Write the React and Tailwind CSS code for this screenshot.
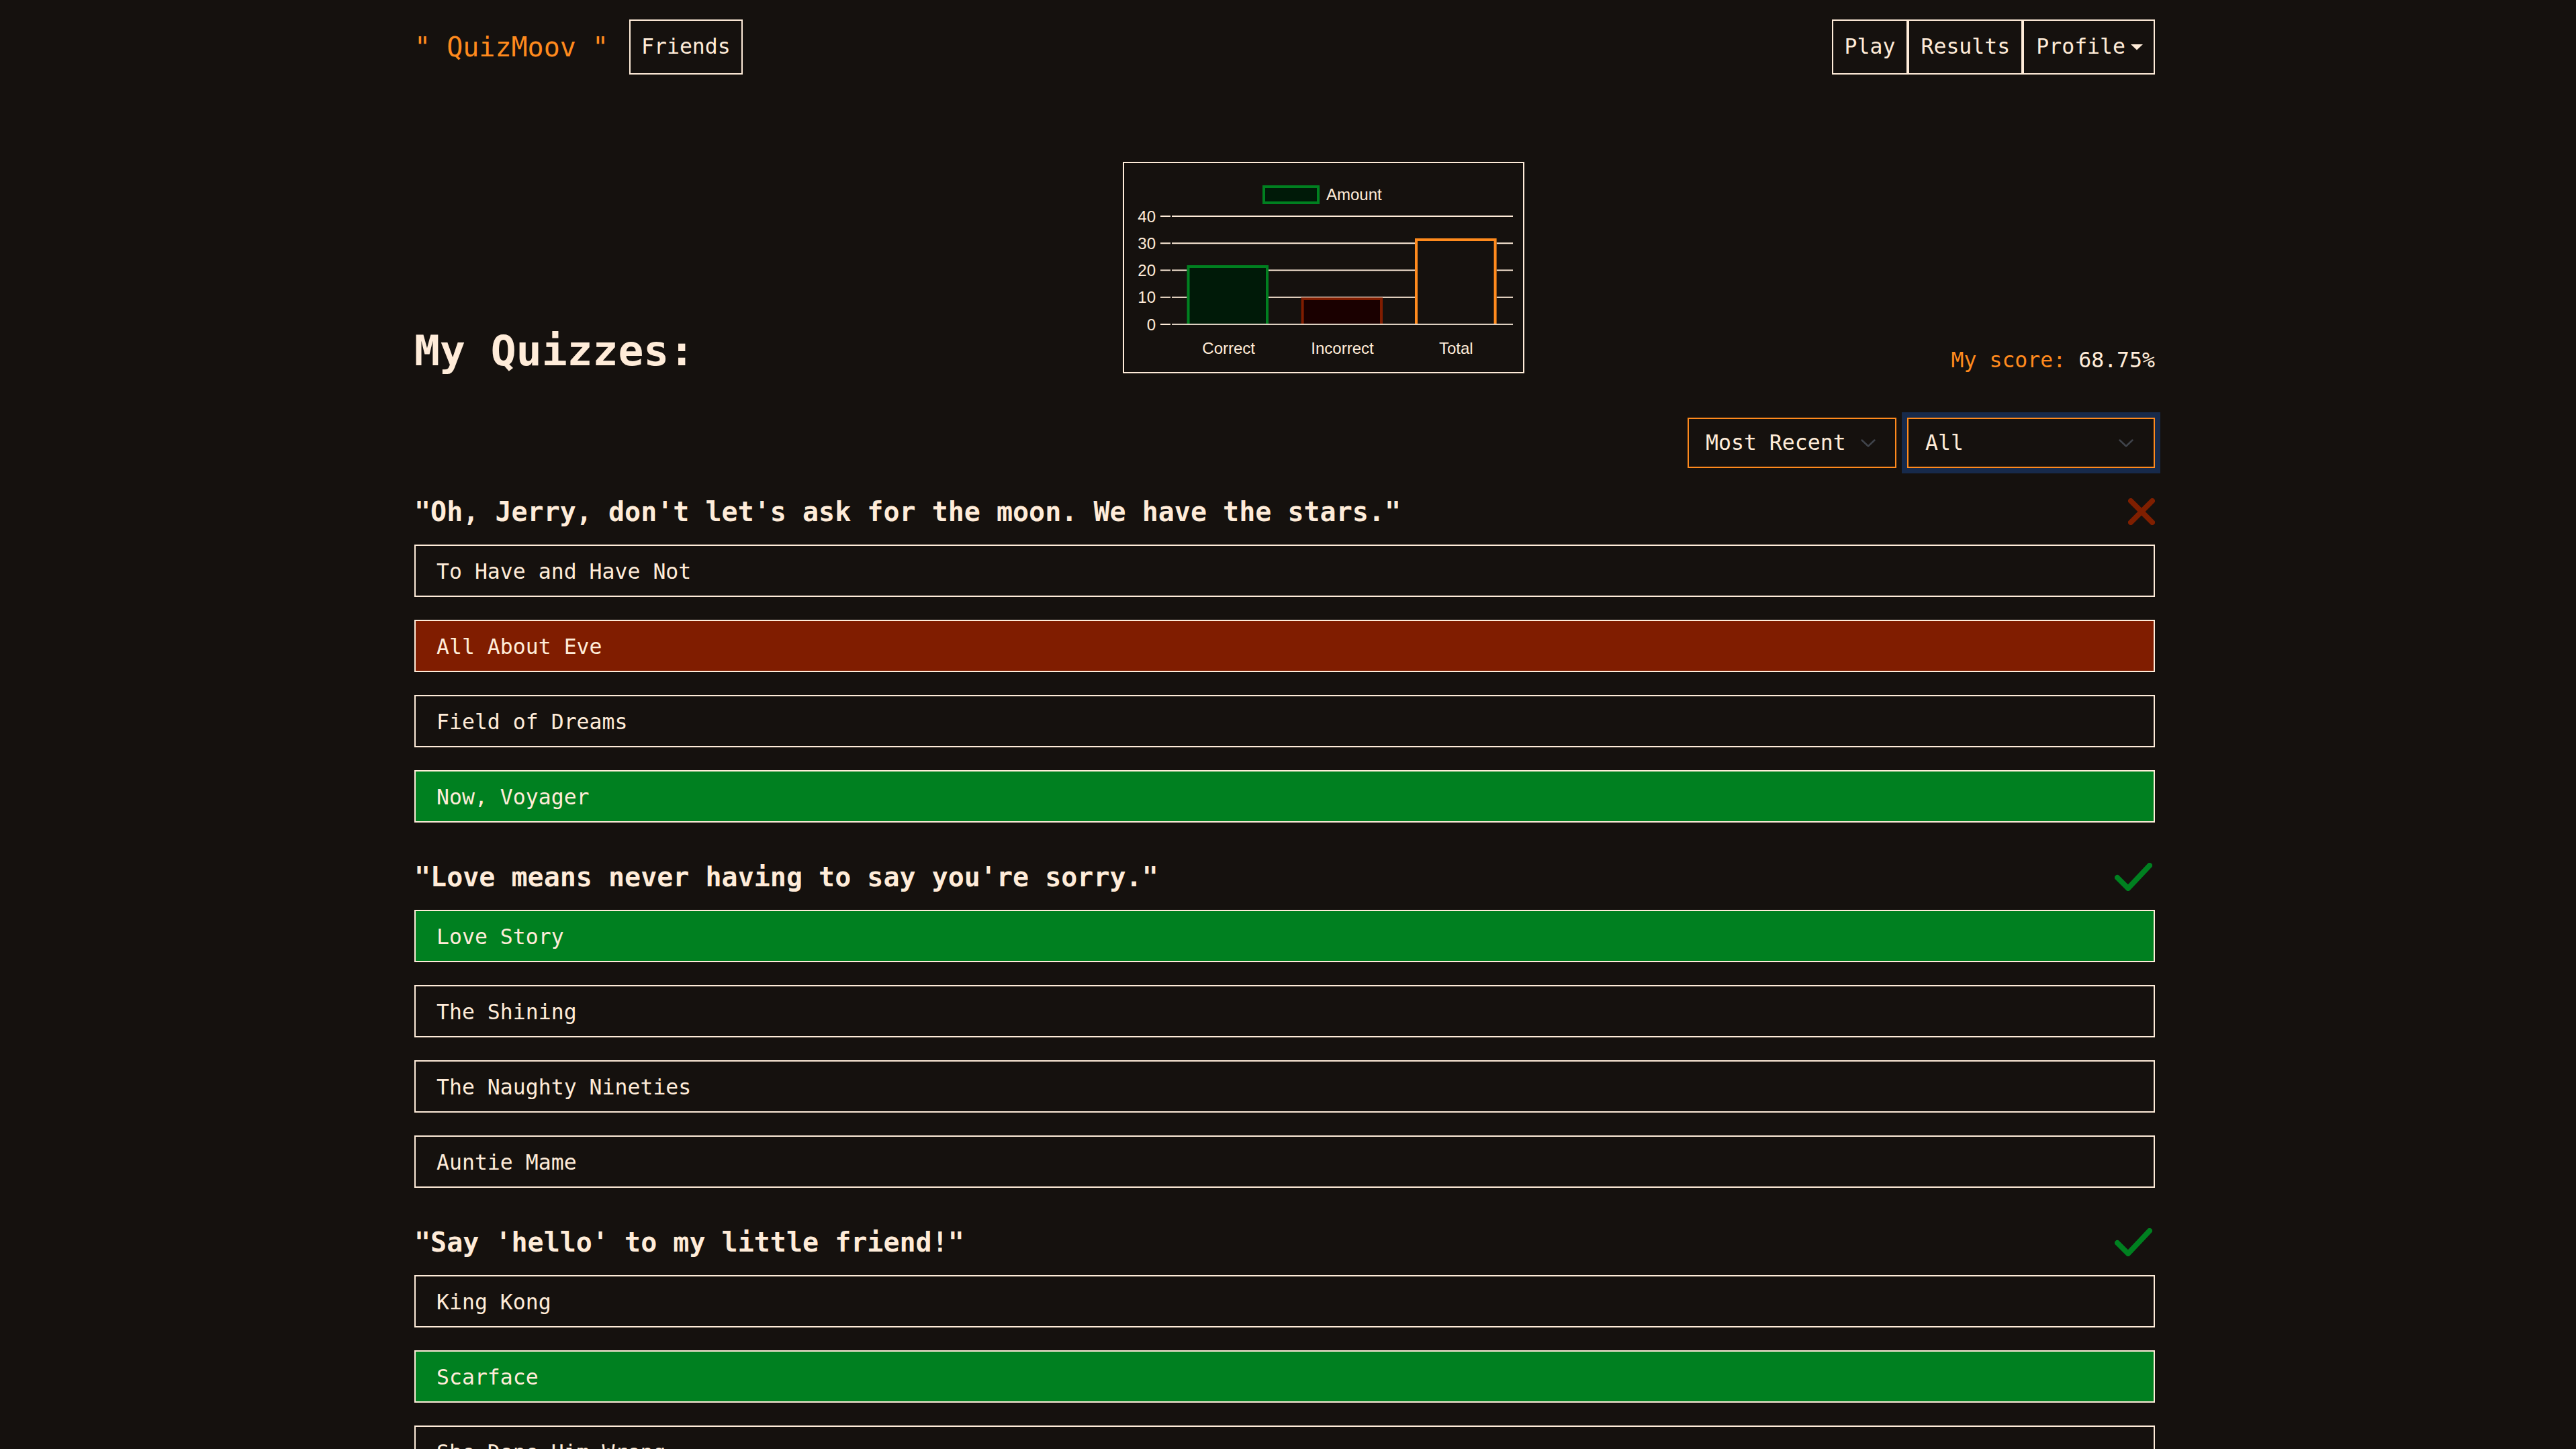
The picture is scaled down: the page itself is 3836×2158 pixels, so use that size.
import React from "react";

function Chevron() {
  return (
    <svg width="22" height="12" viewBox="0 0 22 12" fill="none">
      <polyline points="1.5,1.5 11,10.5 20.5,1.5" stroke="#3f434a" strokeWidth="2.5" strokeLinecap="round" strokeLinejoin="round" />
    </svg>
  );
}

function XIcon() {
  return (
    <svg width="40" height="40" viewBox="0 0 40 40" fill="none">
      <line x1="4" y1="4" x2="36" y2="36" stroke="#7f1f00" strokeWidth="8" strokeLinecap="round" />
      <line x1="36" y1="4" x2="4" y2="36" stroke="#7f1f00" strokeWidth="8" strokeLinecap="round" />
    </svg>
  );
}

function CheckIcon() {
  return (
    <svg width="56" height="42" viewBox="0 0 56 42" fill="none" className="mr-[4px]">
      <polyline points="4,22 20,38 52,4" stroke="#008020" strokeWidth="8" strokeLinecap="round" strokeLinejoin="round" />
    </svg>
  );
}

function Chart() {
  const grid = [79, 119.25, 159.5, 199.75, 240];
  const cream = "#ffecd9";
  return (
    <svg width="594" height="311" viewBox="0 0 594 311" fontFamily="'Liberation Sans', Arial, sans-serif">
      <rect x="208" y="35" width="81" height="24" fill="#001a08" stroke="#008020" strokeWidth="4" />
      <text x="301" y="55" fontSize="24" fill={cream}>Amount</text>
      {grid.map((y, i) => (
        <g key={i}>
          <line x1="54" x2="69" y1={y} y2={y} stroke={cream} strokeWidth="2" />
          <line x1="71" x2="579" y1={y} y2={y} stroke={i === 4 ? "#ddd0c1" : cream} strokeWidth="2" />
          <text x="47" y={y + 8.5} textAnchor="end" fontSize="24" fill={cream}>{40 - 10 * i}</text>
        </g>
      ))}
      <rect x="93.5" y="152" width="121.5" height="87" fill="#001a08" />
      <path d="M95.5 239 V154 H213 V239" fill="none" stroke="#008020" strokeWidth="4" />
      <rect x="263.6" y="200" width="121.4" height="39" fill="#1a0000" />
      <path d="M265.6 239 V202 H383 V239" fill="none" stroke="#801d00" strokeWidth="4" />
      <rect x="433" y="112" width="121.6" height="127" fill="#15110e" />
      <path d="M435 239 V114 H552.6 V239" fill="none" stroke="#ff8a1d" strokeWidth="4" />
      <text x="155.7" y="284" textAnchor="middle" fontSize="24" fill={cream}>Correct</text>
      <text x="325" y="284" textAnchor="middle" fontSize="24" fill={cream}>Incorrect</text>
      <text x="494.3" y="284" textAnchor="middle" fontSize="24" fill={cream}>Total</text>
    </svg>
  );
}

const quizzes = [
  {
    q: "\"Oh, Jerry, don't let's ask for the moon. We have the stars.\"",
    ok: false,
    answers: [
      ["To Have and Have Not", ""],
      ["All About Eve", "red"],
      ["Field of Dreams", ""],
      ["Now, Voyager", "green"],
    ],
  },
  {
    q: "\"Love means never having to say you're sorry.\"",
    ok: true,
    answers: [
      ["Love Story", "green"],
      ["The Shining", ""],
      ["The Naughty Nineties", ""],
      ["Auntie Mame", ""],
    ],
  },
  {
    q: "\"Say 'hello' to my little friend!\"",
    ok: true,
    answers: [
      ["King Kong", ""],
      ["Scarface", "green"],
      ["She Done Him Wrong", ""],
      ["Casablanca", ""],
    ],
  },
];

function Answer({ text, state }) {
  const bg = state === "green" ? "bg-[#008020]" : state === "red" ? "bg-[#801d00]" : "bg-transparent";
  return (
    <div className={`h-[78px] border-2 border-[#ffecd9] ${bg} flex items-center pl-[31px] pt-[4px] text-[31.5px] leading-none whitespace-pre`}>
      {text}
    </div>
  );
}

export default function App() {
  return (
    <div className="min-h-screen bg-[#15110e] text-[#ffecd9] font-['DejaVu_Sans_Mono','Liberation_Mono',monospace] overflow-hidden">
      <div className="w-[2592px] ml-[617px] pb-[200px]">
        <header className="flex items-center justify-between pt-[29px]">
          <div className="flex items-center">
            <span className="text-[40px] leading-none text-[#ff8a1d] whitespace-pre">" QuizMoov "</span>
            <div className="ml-[31px] h-[82px] border-2 border-[#ffecd9] px-[16px] flex items-center text-[31.5px] leading-none">Friends</div>
          </div>
          <div className="flex">
            <div className="h-[82px] border-2 border-[#ffecd9] px-[17px] flex items-center text-[31.5px] leading-none">Play</div>
            <div className="h-[82px] border-2 border-[#ffecd9] px-[17px] flex items-center text-[31.5px] leading-none">Results</div>
            <div className="h-[82px] border-2 border-[#ffecd9] pl-[18px] pr-[16px] flex items-center text-[31.5px] leading-none">
              Profile
              <svg width="18" height="9" viewBox="0 0 18 9" className="ml-[8px]">
                <polygon points="0,0 18,0 9,8.5" fill="#ffecd9" />
              </svg>
            </div>
          </div>
        </header>

        <section className="mt-[130px] flex items-end">
          <div className="w-[1055px]">
            <h1 className="text-[63px] font-bold leading-none mb-[2px]">My Quizzes:</h1>
          </div>
          <div className="w-[598px] h-[315px] border-2 border-[#ffecd9]">
            <Chart />
          </div>
          <div className="flex-1 text-right text-[31.5px] leading-none mb-[4px] whitespace-pre">
            <span className="text-[#ff8a1d]">My score:</span> 68.75%
          </div>
        </section>

        <div className="mt-[66px] flex justify-end gap-[16px]">
          <div className="w-[311px] h-[75px] border-2 border-[#ff8a1d] flex items-center justify-between pl-[25px] pr-[29px] text-[31.5px] leading-none">
            <span>Most Recent</span>
            <Chevron />
          </div>
          <div className="w-[369px] h-[75px] border-2 border-[#ff8a1d] shadow-[0_0_0_8px_#172a4b] flex items-center justify-between pl-[25px] pr-[30px] text-[31.5px] leading-none">
            <span>All</span>
            <Chevron />
          </div>
        </div>

        <div className="mt-[45px] flex flex-col gap-[61px]">
          {quizzes.map((qz, i) => (
            <div key={i}>
              <div className="h-[40px] flex items-center justify-between">
                <h2 className="text-[40px] font-bold leading-none whitespace-pre">{qz.q}</h2>
                {qz.ok ? <CheckIcon /> : <XIcon />}
              </div>
              <div className="mt-[29px] flex flex-col gap-[34px]">
                {qz.answers.map(([t, s], j) => (
                  <Answer key={j} text={t} state={s} />
                ))}
              </div>
            </div>
          ))}
        </div>
      </div>
    </div>
  );
}
